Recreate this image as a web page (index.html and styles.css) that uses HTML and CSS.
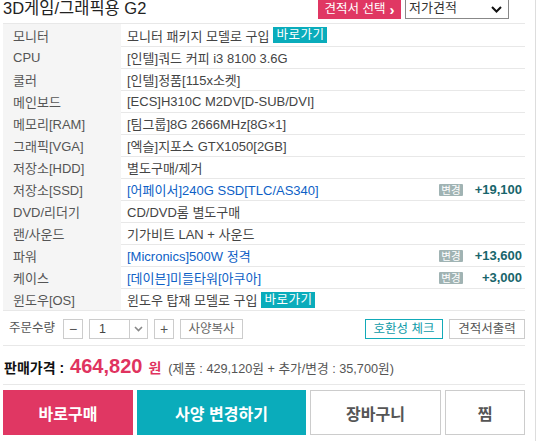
FILE: index.html
```html
<!DOCTYPE html>
<html lang="ko">
<head>
<meta charset="utf-8">
<title>3D게임/그래픽용 G2</title>
<link rel="stylesheet" href="styles.css">
</head>
<body>
<div class="page">
  <div class="header">
    <h1 class="title">3D게임/그래픽용 G2</h1>
    <div class="tools">
      <button class="pick">견적서 선택 <span class="arrow">›</span></button>
      <div class="select">
        <span>저가견적</span>
        <svg class="chev" width="11" height="7" viewBox="0 0 11 7"><path d="M1 1 L5.5 5.5 L10 1" fill="none" stroke="#111" stroke-width="2"/></svg>
      </div>
    </div>
  </div>

  <div class="spec">
    <div class="row first"><div class="label">모니터</div><div class="value">모니터 패키지 모델로 구입<span class="go">바로가기</span></div></div>
    <div class="row"><div class="label">CPU</div><div class="value">[인텔]쿼드 커피 i3 8100 3.6G</div></div>
    <div class="row"><div class="label">쿨러</div><div class="value">[인텔]정품[115x소켓]</div></div>
    <div class="row"><div class="label">메인보드</div><div class="value">[ECS]H310C M2DV[D-SUB/DVI]</div></div>
    <div class="row"><div class="label">메모리[RAM]</div><div class="value">[팀그룹]8G 2666MHz[8G×1]</div></div>
    <div class="row"><div class="label">그래픽[VGA]</div><div class="value">[엑슬]지포스 GTX1050[2GB]</div></div>
    <div class="row"><div class="label">저장소[HDD]</div><div class="value">별도구매/제거</div></div>
    <div class="row"><div class="label">저장소[SSD]</div><div class="value"><span class="blue">[어페이서]240G SSD[TLC/AS340]</span><span class="extra"><span class="badge">변경</span><span class="plus">+19,100</span></span></div></div>
    <div class="row"><div class="label">DVD/리더기</div><div class="value">CD/DVD롬 별도구매</div></div>
    <div class="row"><div class="label">랜/사운드</div><div class="value">기가비트 LAN + 사운드</div></div>
    <div class="row"><div class="label">파워</div><div class="value"><span class="blue">[Micronics]500W 정격</span><span class="extra"><span class="badge">변경</span><span class="plus">+13,600</span></span></div></div>
    <div class="row"><div class="label">케이스</div><div class="value"><span class="blue">[데이븐]미들타워[아쿠아]</span><span class="extra"><span class="badge">변경</span><span class="plus">+3,000</span></span></div></div>
    <div class="row"><div class="label">윈도우[OS]</div><div class="value">윈도우 탑재 모델로 구입<span class="go">바로가기</span></div></div>
  </div>

  <div class="order">
    <span class="qty-label">주문수량</span>
    <button class="box sq">−</button>
    <div class="box qty"><span class="qty-num">1</span><span class="qty-arrow"><svg width="9" height="6" viewBox="0 0 9 6"><path d="M1 1 L4.5 4.5 L8 1" fill="none" stroke="#888" stroke-width="1.6"/></svg></span></div>
    <button class="box sq">+</button>
    <button class="box copy">사양복사</button>
    <button class="box compat">호환성 체크</button>
    <button class="box print">견적서출력</button>
  </div>

  <div class="price">
    <span class="price-label">판매가격 :</span>
    <span class="price-num">464,820</span>
    <span class="price-won">원</span>
    <span class="price-detail">(제품 : 429,120원 + 추가/변경 : 35,700원)</span>
  </div>

  <div class="actions">
    <button class="act buy">바로구매</button>
    <button class="act change">사양 변경하기</button>
    <button class="act cart">장바구니</button>
    <button class="act wish">찜</button>
  </div>
</div>
</body>
</html>
```

FILE: styles.css
```css
html, body {
  margin: 0;
  padding: 0;
  background: #fff;
}
body {
  font-family: "Liberation Sans", "Noto Sans CJK KR", sans-serif;
  font-size: 13px;
  color: #444;
}
button {
  font-family: inherit;
  margin: 0;
  padding: 0;
  cursor: pointer;
}
.page {
  margin-left: 3px;
  width: 522px;
  padding-right: 10px;
  border-right: 1px solid #ddd;
  min-height: 441px;
  box-sizing: content-box;
}
.header {
  display: flex;
  justify-content: space-between;
  align-items: flex-start;
  height: 23px;
}
.title {
  margin: 0;
  font-size: 16.5px;
  font-weight: normal;
  line-height: 16px;
  color: #222;
}
.tools {
  display: flex;
  margin-top: -1px;
  margin-right: 16px;
  gap: 4px;
}
.pick {
  width: 83px;
  height: 19px;
  margin-top: 1px;
  border: none;
  background: #e03763;
  color: #fff;
  font-size: 12.5px;
  line-height: 19px;
  display: flex;
  align-items: center;
  justify-content: center;
  gap: 4px;
}
.pick .arrow {
  font-weight: bold;
  font-size: 15px;
  line-height: 15px;
}
.select {
  width: 95px;
  height: 18px;
  border: 1px solid #888;
  display: flex;
  align-items: center;
  justify-content: space-between;
  padding: 0 4px 0 3px;
  box-sizing: content-box;
  font-size: 13px;
  color: #333;
  line-height: 18px;
}
.select span {
  margin-top: -3px;
}
.chev {
  margin-right: 2px;
}

.spec {
  border-top: 1px solid #e8e8e8;
  border-bottom: 1px solid #e8e8e8;
}
.row {
  display: grid;
  grid-template-columns: 118px 1fr;
  height: 22px;
}
.label {
  background: #f5f5f5;
  padding-left: 10px;
  padding-top: 1px;
  display: flex;
  align-items: center;
  color: #555;
  white-space: nowrap;
}
.row.first .label {
  padding-top: 0;
}
.value {
  border-top: 1px solid #e8e8e8;
  padding-left: 6px;
  padding-right: 3px;
  display: flex;
  align-items: center;
  color: #444;
  white-space: nowrap;
}
.row.first .value {
  border-top: none;
}
.blue {
  color: #0e5fc6;
}
.go {
  margin-left: 4px;
  width: 54px;
  height: 16px;
  line-height: 16px;
  background: #0aacbb;
  color: #fff;
  text-align: center;
  font-size: 12.5px;
  letter-spacing: 0.5px;
}
.extra {
  margin-left: auto;
  display: flex;
  align-items: center;
}
.badge {
  width: 24px;
  height: 12px;
  line-height: 12px;
  background: #a0b3b3;
  color: #fff;
  font-size: 10.5px;
  text-align: center;
  border-radius: 1px;
}
.plus {
  width: 59px;
  text-align: right;
  font-weight: bold;
  color: #18656b;
  font-size: 13px;
}

.order {
  display: flex;
  align-items: center;
  height: 35px;
  border-bottom: 1px solid #e8e8e8;
  padding-top: 1px;
  box-sizing: border-box;
}
.qty-label {
  margin-left: 6px;
  margin-right: 8px;
  color: #555;
  margin-top: -4px;
  font-size: 12.5px;
}
.box {
  height: 20px;
  border: 1px solid #ccc;
  background: #fff;
  color: #666;
  box-sizing: border-box;
  font-size: 12.5px;
  line-height: 18px;
}
.sq {
  width: 20px;
  font-size: 14px;
  color: #555;
}
.qty {
  width: 59px;
  margin: 0 6px;
  display: flex;
  align-items: stretch;
}
.qty-num {
  flex: 1;
  padding-left: 9px;
  color: #444;
}
.qty-arrow {
  width: 17px;
  border-left: 1px solid #ccc;
  display: flex;
  align-items: center;
  justify-content: center;
}
.copy {
  width: 63px;
  margin-left: 6px;
}
.compat {
  width: 78px;
  margin-left: auto;
  border-color: #12aab8;
  color: #0e9aa8;
}
.print {
  width: 76px;
  margin-left: 6px;
  color: #555;
}

.price {
  display: flex;
  align-items: baseline;
  height: 39px;
  border-bottom: 1px solid #e8e8e8;
  padding-top: 9px;
  box-sizing: border-box;
}
.price-label {
  font-size: 14px;
  font-weight: bold;
  color: #111;
  margin-left: 1px;
}
.price-num {
  font-size: 20px;
  font-weight: bold;
  color: #e0335f;
  margin-left: 6px;
}
.price-won {
  font-size: 14px;
  font-weight: bold;
  color: #e0335f;
  margin-left: 6px;
}
.price-detail {
  color: #555;
  margin-left: 7px;
  font-size: 12.7px;
}

.actions {
  display: flex;
  gap: 4px;
  margin-top: 5px;
}
.act {
  height: 45px;
  font-size: 16px;
  font-weight: bold;
  border: none;
}
.buy {
  width: 130px;
  background: #e03763;
  color: #fff;
}
.change {
  width: 169px;
  background: #0aacbb;
  color: #fff;
}
.cart {
  width: 131px;
  background: #fff;
  border: 1px solid #ccc;
  color: #555;
}
.wish {
  flex: 1;
  background: #fff;
  border: 1px solid #ccc;
  color: #555;
}
```
